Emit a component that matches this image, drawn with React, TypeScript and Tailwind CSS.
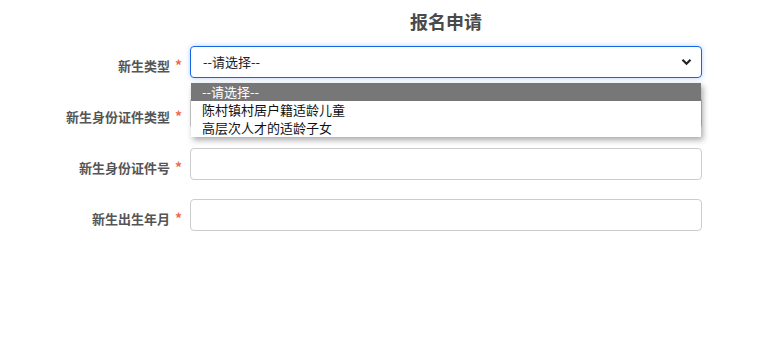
import React from "react";

const font = { fontFamily: '"Noto Sans CJK SC", "Noto Sans", sans-serif' };

function Label({ text }: { text: string }) {
  return (
    <div className="w-[190px] shrink-0 pr-[8px] pt-[6px] text-right text-[13px] font-bold leading-[20px] text-[#555]">
      {text}
      <span className="ml-[5px] text-[14px] font-bold text-[#ef6a4c]">*</span>
    </div>
  );
}

export default function App() {
  return (
    <div className="relative h-[343px] w-[778px] bg-white" style={font}>
      <div className="flex h-[40px] items-center">
        <div className="w-[190px] shrink-0" />
        <div className="w-[512px] pt-[2px] text-center text-[18px] font-bold text-[#4a4a4a]">报名申请</div>
      </div>
      <div className="mt-[6px] flex flex-col gap-[19px]">
        <div className="relative flex items-center">
          <Label text="新生类型" />
          <div className="flex h-[32px] w-[512px] items-center justify-between rounded-[4px] border border-[#1266e6] pl-[12px] pr-[9px] text-[13px] text-[#222] shadow-[0_0_5px_rgba(40,120,240,0.35)]">
            <span>--请选择--</span>
            <svg width="11" height="8" viewBox="0 0 11 8">
              <path d="M1.5 1.8 L5.5 5.8 L9.5 1.8" stroke="#222" strokeWidth="2.2" fill="none" />
            </svg>
          </div>
          <div className="absolute left-[191px] top-[37px] z-10 w-[510px] bg-white text-[13px] leading-[18px] text-[#111] shadow-[2px_3px_6px_rgba(0,0,0,0.35)]">
            <div className="h-[18px] bg-[#777] pl-[11px] text-white">--请选择--</div>
            <div className="h-[18px] pl-[11px]">陈村镇村居户籍适龄儿童</div>
            <div className="h-[18px] pl-[11px]">高层次人才的适龄子女</div>
          </div>
        </div>
        <div className="flex items-center">
          <Label text="新生身份证件类型" />
          <div className="h-[32px] w-[512px] rounded-[4px] border border-[#ccc]" />
        </div>
        <div className="flex items-center">
          <Label text="新生身份证件号" />
          <div className="h-[32px] w-[512px] rounded-[4px] border border-[#ccc]" />
        </div>
        <div className="flex items-center">
          <Label text="新生出生年月" />
          <div className="h-[32px] w-[512px] rounded-[4px] border border-[#ccc]" />
        </div>
      </div>
    </div>
  );
}
